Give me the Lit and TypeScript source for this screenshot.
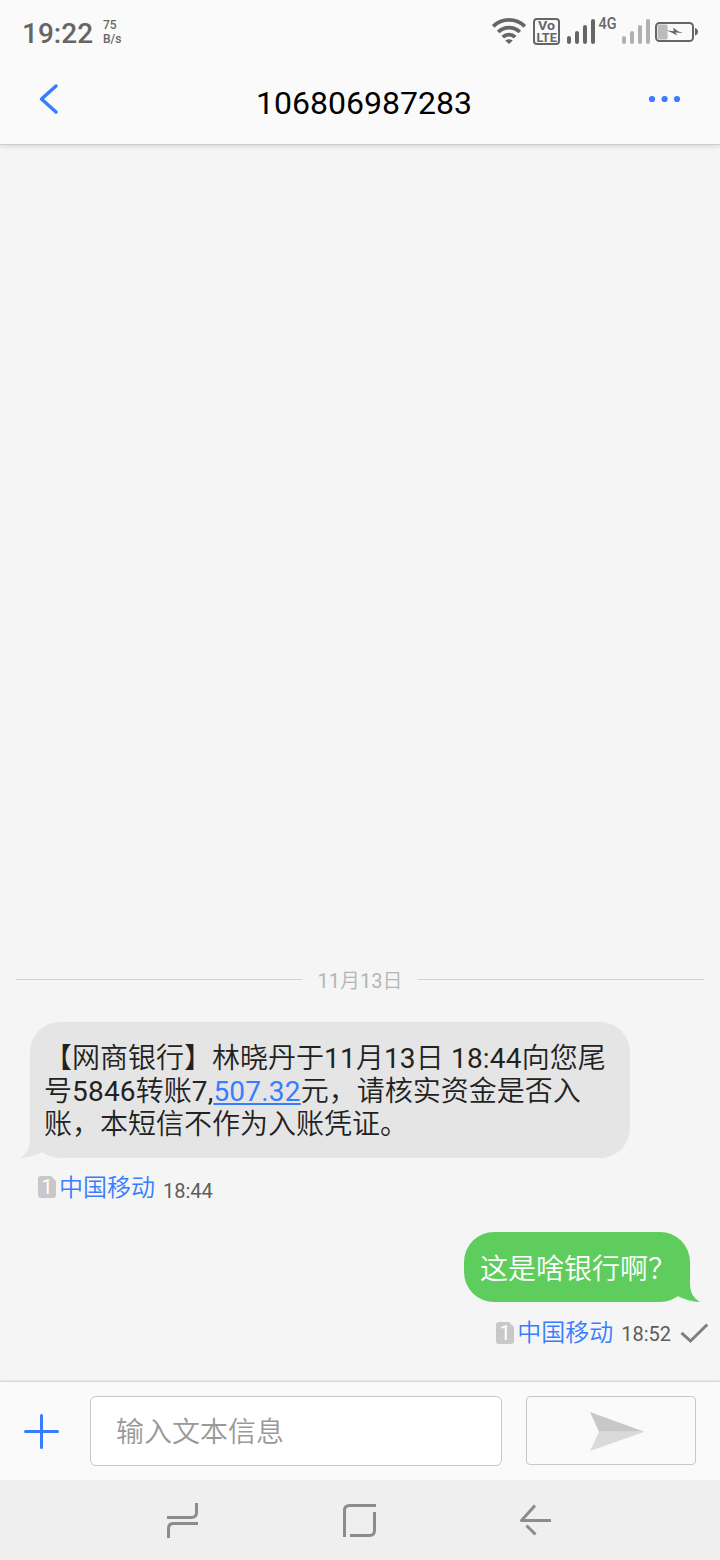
import { LitElement, html, css, svg } from "lit";
import { customElement, property } from "lit/decorators.js";

const fontStack = css`Roboto, "Noto Sans CJK SC DemiLight", "Noto Sans CJK SC", sans-serif`;

@customElement("status-bar")
class StatusBar extends LitElement {
  static styles = css`
    :host { display: flex; align-items: flex-start; height: 64px; padding: 0 21px 0 22px; box-sizing: border-box; color: #666; }
    .clock { font-size: 28px; font-weight: 500; line-height: 33px; padding-top: 17px; }
    .speed { font-size: 12px; font-weight: 500; line-height: 14px; margin-left: 10px; padding-top: 18px; }
    .speed div { white-space: nowrap; }
    .icons { display: flex; margin-left: auto; padding-top: 16px; }
    svg { display: block; height: 32px; flex: none; overflow: visible; }
    .volte { margin-left: 7px; }
    .sig { margin-left: 7px; }
    .net { margin-left: 3px; }
    .sig2 { margin-left: 3px; }
    .bat { margin-left: 4px; }
  `;

  bars(color: string) {
    return svg`<g stroke=${color} stroke-width="4" stroke-linecap="round">
      <path d="M2 22v4M10 17v9M18 11v15M26 5v21"/></g>`;
  }

  render() {
    return html`
      <div class="clock">19:22</div>
      <div class="speed"><div>75</div><div>B/s</div></div>
      <div class="icons">
        <svg width="34" viewBox="0 0 34 32" fill="none" stroke="#666" stroke-width="3.8">
          <path d="M1.200 10.400A22.500 22.500 0 0 1 32.800 10.400"/>
          <path d="M6.200 16A15.500 15.500 0 0 1 27.800 16"/>
          <path d="M10.800 21.200A9 9 0 0 1 23.200 21.200"/>
          <path d="M13.200 24.600Q17 21.800 20.800 24.600L17 28Z" fill="#666" stroke="none"/>
        </svg>
        <svg class="volte" width="27" viewBox="0 0 27 32" fill="#666">
          <rect x="1" y="3" width="25" height="25" rx="3" fill="none" stroke="#666" stroke-width="2"/>
          <text x="5" y="14" font-size="12.500" font-weight="700" textLength="17" lengthAdjust="spacingAndGlyphs">Vo</text>
          <text x="3.400" y="25.800" font-size="13" font-weight="700" textLength="20.500" lengthAdjust="spacingAndGlyphs">LTE</text>
        </svg>
        <svg class="sig" width="28" viewBox="0 0 28 32">${this.bars("#666")}</svg>
        <svg class="net" width="20" viewBox="0 0 20 32" fill="#666">
          <text x="0.500" y="13" font-size="16.500" font-weight="500" textLength="18" lengthAdjust="spacingAndGlyphs">4G</text>
        </svg>
        <svg class="sig2" width="30" viewBox="-1 0 30 32">${this.bars("#b0b0b0")}</svg>
        <svg class="bat" width="44" viewBox="0 0 44 32">
          <rect x="1" y="7" width="37" height="18" rx="3.5" fill="none" stroke="#666" stroke-width="2"/>
          <rect x="2.600" y="8.600" width="10" height="14.800" rx="1.500" fill="#bbb"/>
          <path d="M40 12q3 1 3 3.800t-3 3.800z" fill="#666"/>
          <path d="M11.300 14.300L18.800 15.200L18.200 11.600L23 15.200L28 17L20.500 16.600L22 19.500L16.500 16.600Z" fill="#666"/>
        </svg>
      </div>`;
  }
}

@customElement("message-meta")
class MessageMeta extends LitElement {
  @property() time = "";
  @property({ type: Boolean }) sent = false;
  static styles = css`
    :host { display: flex; align-items: flex-start; height: 34px; }
    svg { display: block; flex: none; }
    .sim { margin-top: 5px; }
    .carrier { font-size: 24px; line-height: 28px; color: #377dff; margin: 3px 0 0 3px; }
    .time { font-size: 20px; line-height: 24px; color: #5c5c5c; margin: 8px 0 0 8px; }
    .check { margin: 7px 0 0 9px; }
    :host([sent]) .sim { margin-top: 7px; }
    :host([sent]) .carrier { margin-top: 4px; }
    :host([sent]) .time { margin-top: 7px; }
  `;
  render() {
    return html`
      <svg class="sim" width="18" height="22" viewBox="0 0 18 22">
        <path d="M3 0H13L18 5V19a3 3 0 0 1-3 3H3a3 3 0 0 1-3-3V3a3 3 0 0 1 3-3Z" fill="#c8c8c8"/>
        <text x="3.400" y="18" font-size="20" font-weight="400" fill="#fff">1</text>
      </svg>
      <span class="carrier">中国移动</span>
      <span class="time">${this.time}</span>
      ${this.sent
        ? html`<svg class="check" width="29" height="22" viewBox="0 0 29 22">
            <path d="M1.500 10.800L10.500 19L27.300 2.500" fill="none" stroke="#808080" stroke-width="3"/>
          </svg>`
        : ""}`;
  }
}

@customElement("app-root")
class AppRoot extends LitElement {
  static styles = css`
    :host { display: flex; flex-direction: column; width: 720px; height: 1560px; background: #f5f5f5; font-family: ${fontStack}; overflow: hidden; }
    svg { display: block; flex: none; }
    .head { background: #fafafa; height: 144px; border-bottom: 1px solid #cdcdcd; box-shadow: 0 1px 5px rgba(0,0,0,.13); flex: none; }
    .title { display: grid; grid-template-columns: 60px 1fr 60px; align-items: start; padding: 0 23px 0 21px; height: 80px; box-sizing: border-box; }
    .title h1 { margin: 20px 0 0 10px; font-size: 32px; font-weight: 400; line-height: 38px; text-align: center; color: #000; }
    .back { margin: 18px 0 0 16px; }
    .more { margin: 30px 0 0 10px; }
    .list { flex: 1; display: flex; flex-direction: column; justify-content: flex-end; }
    .date { display: flex; align-items: center; gap: 16px; margin: 0 16px; height: 26px; color: #b4b4b4; font-size: 20px; line-height: 26px; }
    .date i { flex: 1; height: 1px; background: #d2d2d2; margin-top: -1px; }
    .date span { padding-top: 2px; }
    .bubble { position: relative; isolation: isolate; box-sizing: border-box; border-radius: 30px; font-size: 28px; line-height: 33px; flex: none; }
    .in { width: 600px; height: 136px; margin: 29px 0 0 30px; padding: 20px 14px 0; background: #e5e5e5; color: #222; white-space: nowrap; }
    .out { align-self: flex-end; height: 70px; margin: 27px 30px 0 0; padding: 21px 14px 0 16px; background: #5fcd5d; color: #fff; }
    .tail { position: absolute; bottom: 0; z-index: -1; }
    .in .tail { left: -10px; }
    .out .tail { right: -10px; }
    .d, .num { letter-spacing: .2px; }
    .num { color: #377dff; text-decoration: underline; text-decoration-thickness: 2px; text-underline-offset: 2px; }
    .meta-in { margin: 13px 0 0 38px; }
    .meta-out { margin: 13px 11px 33px 0; align-self: flex-end; }
    .composer { flex: none; display: flex; align-items: flex-start; height: 98px; box-sizing: border-box; background: #fafafa; padding: 14px 24px 0; box-shadow: 0 -1px 2px rgba(0,0,0,.18); }
    .plus { margin-top: 18px; }
    .field { box-sizing: border-box; width: 412px; height: 70px; margin-left: 31px; border: 1px solid #c8c8c8; border-radius: 6px; background: #fff; padding: 19px 25px 0; font-size: 28px; line-height: 33px; color: #999; }
    .send { box-sizing: border-box; width: 170px; height: 69px; margin-left: 24px; border: 1px solid #c8c8c8; border-radius: 4px; padding: 15px 0 0 63px; }
    .nav { flex: none; display: flex; height: 80px; background: #efefef; padding: 22px 0 0 166px; box-sizing: border-box; }
    .recent { margin-left: 1px; }
    .home { margin-left: 143px; }
    .return { margin-left: 140px; }
  `;
  render() {
    return html`
      <header class="head">
        <status-bar></status-bar>
        <div class="title">
          <svg class="back" width="24" height="34" viewBox="0 0 24 34">
            <path d="M19 4L4.500 17L19 30" fill="none" stroke="#377dff" stroke-width="3.500" stroke-linecap="round" stroke-linejoin="round"/>
          </svg>
          <h1>106806987283</h1>
          <svg class="more" width="36" height="10" viewBox="0 0 36 10" fill="#377dff">
            <circle cx="5" cy="5" r="3.100"/><circle cx="17.600" cy="5" r="3.100"/><circle cx="30" cy="5" r="3.100"/>
          </svg>
        </div>
      </header>
      <main class="list">
        <div class="date"><i></i><span>11月13日</span><i></i></div>
        <div class="bubble in">
          <svg class="tail" width="34" height="34" viewBox="0 0 34 34"><path d="M10 0V17Q10 28 0 34Q12 33.500 22.500 28L34 20V0Z" fill="#e5e5e5"/></svg>
          【网商银行】林晓丹于<span class="d">11</span>月<span class="d">13</span>日<span class="d"> 18:44</span>向您尾<br>号<span class="d">5846</span>转账<span class="d">7,</span><span class="num">507.32</span>元，请核实资金是否入<br>账，本短信不作为入账凭证。
        </div>
        <message-meta class="meta-in" time="18:44"></message-meta>
        <div class="bubble out">
          <svg class="tail" width="34" height="34" viewBox="0 0 34 34"><path d="M24 0V17Q24 28 34 34Q22 33.500 11.500 28L0 20V0Z" fill="#5fcd5d"/></svg>
          这是啥银行啊？
        </div>
        <message-meta class="meta-out" time="18:52" sent></message-meta>
      </main>
      <footer class="composer">
        <svg class="plus" width="35" height="35" viewBox="0 0 35 35"><path d="M17.500 1.500V33.500M1.500 17.500H33.500" stroke="#377dff" stroke-width="3" stroke-linecap="round"/></svg>
        <div class="field">输入文本信息</div>
        <div class="send">
          <svg width="56" height="40" viewBox="0 0 56 40"><path d="M0 0L54.500 19.700H9Z" fill="#c8c8c8"/><path d="M0 39L9 19.700H54.500Z" fill="#dadada"/></svg>
        </div>
      </footer>
      <nav class="nav">
        <svg class="recent" width="32" height="38" viewBox="0 0 32 38" fill="none" stroke="#8c8c8c" stroke-width="3"><path d="M29.500 1V10.500Q29.500 15.500 24.500 15.500H0M1.500 36V26.500Q1.500 21.500 6.500 21.500H31"/></svg>
        <svg class="home" width="36" height="38" viewBox="0 0 36 38" fill="none" stroke="#8c8c8c" stroke-width="3"><path d="M2.500 35V8.500Q2.500 3.500 7.500 3.500H34M32.500 10V28.500Q32.500 33.500 27.500 33.500H8"/></svg>
        <svg class="return" width="34" height="38" viewBox="0 0 34 38" fill="none" stroke="#8c8c8c" stroke-width="3"><path d="M33 18.500H3.500L17 3.500" stroke-linejoin="round"/><path d="M8.500 23.500L17.500 32.500"/></svg>
      </nav>`;
  }
}
